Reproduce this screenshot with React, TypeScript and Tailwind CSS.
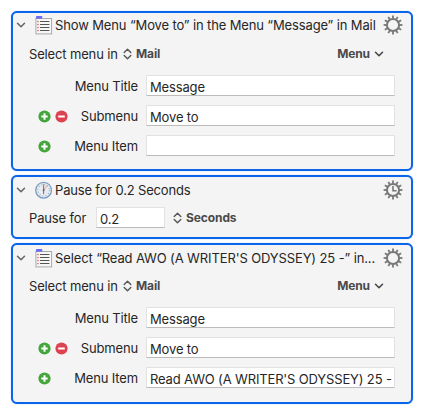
import clsx from 'clsx';
import * as React from 'react';

function Chevron({ dark }: { dark?: boolean }) {
  return (
    <svg
      className={clsx('h-[10px] w-[10px] shrink-0', dark ? 'text-[#444]' : 'text-[#666]')}
      viewBox="0 0 10 10"
      fill="none"
    >
      <path d="M1.5 3.2l3.5 3.6 3.5-3.6" stroke="currentColor" strokeWidth="1.5" strokeLinecap="round" strokeLinejoin="round" />
    </svg>
  );
}

function UpDown() {
  return (
    <svg className="h-[12px] w-[9px] shrink-0" viewBox="0 0 9 12" fill="none">
      <path
        d="M1.2 4.4l3.3-3.2 3.3 3.2M1.2 7.6l3.3 3.2 3.3-3.2"
        stroke="#555"
        strokeWidth="1.4"
        strokeLinecap="round"
        strokeLinejoin="round"
      />
    </svg>
  );
}

function MenuIcon() {
  return (
    <svg className="h-[19px] w-[18px] shrink-0" viewBox="0 0 18 19">
      <rect x="0.9" y="2.5" width="15.7" height="15.4" fill="#f6f6f6" stroke="#aaa" />
      <rect x="1" y="0" width="6.2" height="2.8" rx="0.5" fill="#6b6cf8" />
      {[5.5, 8.5, 11.5, 14.5].map((y) => (
        <React.Fragment key={y}>
          <rect x="2.3" y={y - 0.6} width="1.3" height="1.3" fill="#e8574b" />
          <rect x="5" y={y - 0.5} width="9.4" height="1" fill="#555" />
        </React.Fragment>
      ))}
    </svg>
  );
}

function ClockIcon() {
  return (
    <svg className="h-[19px] w-[18px] shrink-0" viewBox="0 0 18 19">
      <circle cx="8.6" cy="9.2" r="7.9" fill="#e6ecf2" stroke="#7c9bc4" strokeWidth="1.3" />
      <circle cx="8.6" cy="9.2" r="5.8" fill="none" stroke="#a5aab0" strokeWidth="1.2" strokeDasharray="1 2.037" />
      <path d="M8.6 9.2l3.8-5" stroke="#ef9d90" strokeWidth="1" />
      <path d="M8.6 3.5v9.6" stroke="#666" strokeWidth="0.9" />
      <circle cx="8.6" cy="9.2" r="1" fill="#666" />
    </svg>
  );
}

function Gear({ clock }: { clock?: boolean }) {
  return (
    <svg className="h-[20px] w-[20px] shrink-0" viewBox="-10 -10 20 20" fill="none" stroke="#777">
      <circle r="6.1" strokeWidth="2" />
      {Array.from({ length: 12 }, (_, i) => (
        <path key={i} d="M0-6.5V-9.4" strokeWidth="1.8" transform={`rotate(${i * 30})`} />
      ))}
      {clock ? <path d="M0-4V.7H3.6" strokeWidth="1.6" /> : null}
    </svg>
  );
}

function RoundButton({ kind }: { kind: 'add' | 'remove' }) {
  return (
    <button type="button" aria-label={kind} className="h-[13px] w-[13px] shrink-0">
      <svg className="block h-[13px] w-[13px]" viewBox="0 0 13 13">
        <circle cx="6.5" cy="6.5" r="6.1" fill={kind === 'add' ? '#43a53c' : '#dc4250'} />
        <path
          d={kind === 'add' ? 'M3.3 6.5h6.4M6.5 3.3v6.4' : 'M3.2 6.5h6.6'}
          stroke="#fff"
          strokeWidth="2"
        />
      </svg>
    </button>
  );
}

function Strong({ className, children }: { className?: string; children: React.ReactNode }) {
  return (
    <span className={clsx('text-[12px] font-bold tracking-[-0.1px] text-[#4a4a4a]', className)}>
      {children}
    </span>
  );
}

type ActionCardProps = {
  title: string;
  titleClass: string;
  headerClass: string;
  icon: React.ReactNode;
  className: string;
  clock?: boolean;
  children: React.ReactNode;
};

function ActionCard({ title, titleClass, headerClass, icon, className, clock, children }: ActionCardProps) {
  return (
    <section
      className={clsx(
        'w-[402px] rounded-[6px] border-2 border-[#0b65ea] bg-[#f4f4f4] shadow-[0_0_1px_#4d94f5]',
        className,
      )}
    >
      <header className={clsx('flex h-[24px] items-center pl-[3px]', headerClass)}>
        <Chevron />
        <div className="ml-[9px] flex">{icon}</div>
        <h2 className={clsx('ml-[2px] w-[326px] whitespace-nowrap', titleClass)}>{title}</h2>
        <div className="-mt-px ml-[2px] flex">
          <Gear clock={clock} />
        </div>
      </header>
      {children}
    </section>
  );
}

type FieldProps = { label: string; value: string; add?: boolean; remove?: boolean };

function FieldRow({ label, value, add, remove }: FieldProps) {
  return (
    <div className="flex h-[30px] items-center pl-[25px]">
      <div className="flex w-[31px] gap-[4px]">
        {add ? <RoundButton kind="add" /> : null}
        {remove ? <RoundButton kind="remove" /> : null}
      </div>
      <span className="w-[69px] text-right whitespace-nowrap">{label}</span>
      <Field className="ml-[8px] w-[249px]">{value}</Field>
    </div>
  );
}

function Field({ className, children }: { className: string; children: React.ReactNode }) {
  return (
    <div
      className={clsx(
        '-mt-px flex h-[21px] items-center border border-[#e2e2e2] border-b-[#bcbcbc] bg-white pt-[2px] pl-[3px] whitespace-nowrap',
        className,
      )}
    >
      {children}
    </div>
  );
}

function MenuBody({ item }: { item: string }) {
  return (
    <>
      <div className="mb-px flex h-[32px] items-center pl-[16px]">
        <span className="w-[94px] whitespace-nowrap">Select menu in</span>
        <UpDown />
        <Strong className="ml-[4px]">Mail</Strong>
        <Strong className="ml-auto">Menu</Strong>
        <div className="mr-[27px] ml-[4px] flex">
          <Chevron dark />
        </div>
      </div>
      <FieldRow label="Menu Title" value="Message" />
      <FieldRow label="Submenu" value="Move to" add remove />
      <FieldRow label="Menu Item" value={item} add />
    </>
  );
}

export default function App() {
  return (
    <main className="flex h-[418px] w-[424px] flex-col gap-[4px] bg-white pt-[11px] pl-[11px] font-['Inter',sans-serif] text-[13px] leading-[18px] tracking-[-0.15px] text-[#262626]">
      <ActionCard
        title="Show Menu “Move to” in the Menu “Message” in Mail"
        titleClass="tracking-[-0.13px]"
        headerClass="mb-px"
        icon={<MenuIcon />}
        className="h-[160px]"
      >
        <MenuBody item="" />
      </ActionCard>
      <ActionCard
        title="Pause for 0.2 Seconds"
        titleClass="tracking-[-0.17px]"
        headerClass="mt-px"
        icon={<ClockIcon />}
        className="h-[64px]"
        clock
      >
        <div className="flex h-[32px] items-center pl-[16px]">
          <span className="w-[67px]">Pause for</span>
          <Field className="w-[69px]">0.2</Field>
          <div className="ml-[8px] flex">
            <UpDown />
          </div>
          <Strong className="ml-[4px]">Seconds</Strong>
        </div>
      </ActionCard>
      <ActionCard
        title="Select “Read AWO (A WRITER'S ODYSSEY) 25 -” in..."
        titleClass="tracking-[-0.12px]"
        headerClass="mt-px"
        icon={<MenuIcon />}
        className="h-[161px]"
      >
        <MenuBody item="Read AWO (A WRITER'S ODYSSEY) 25 -" />
      </ActionCard>
    </main>
  );
}
